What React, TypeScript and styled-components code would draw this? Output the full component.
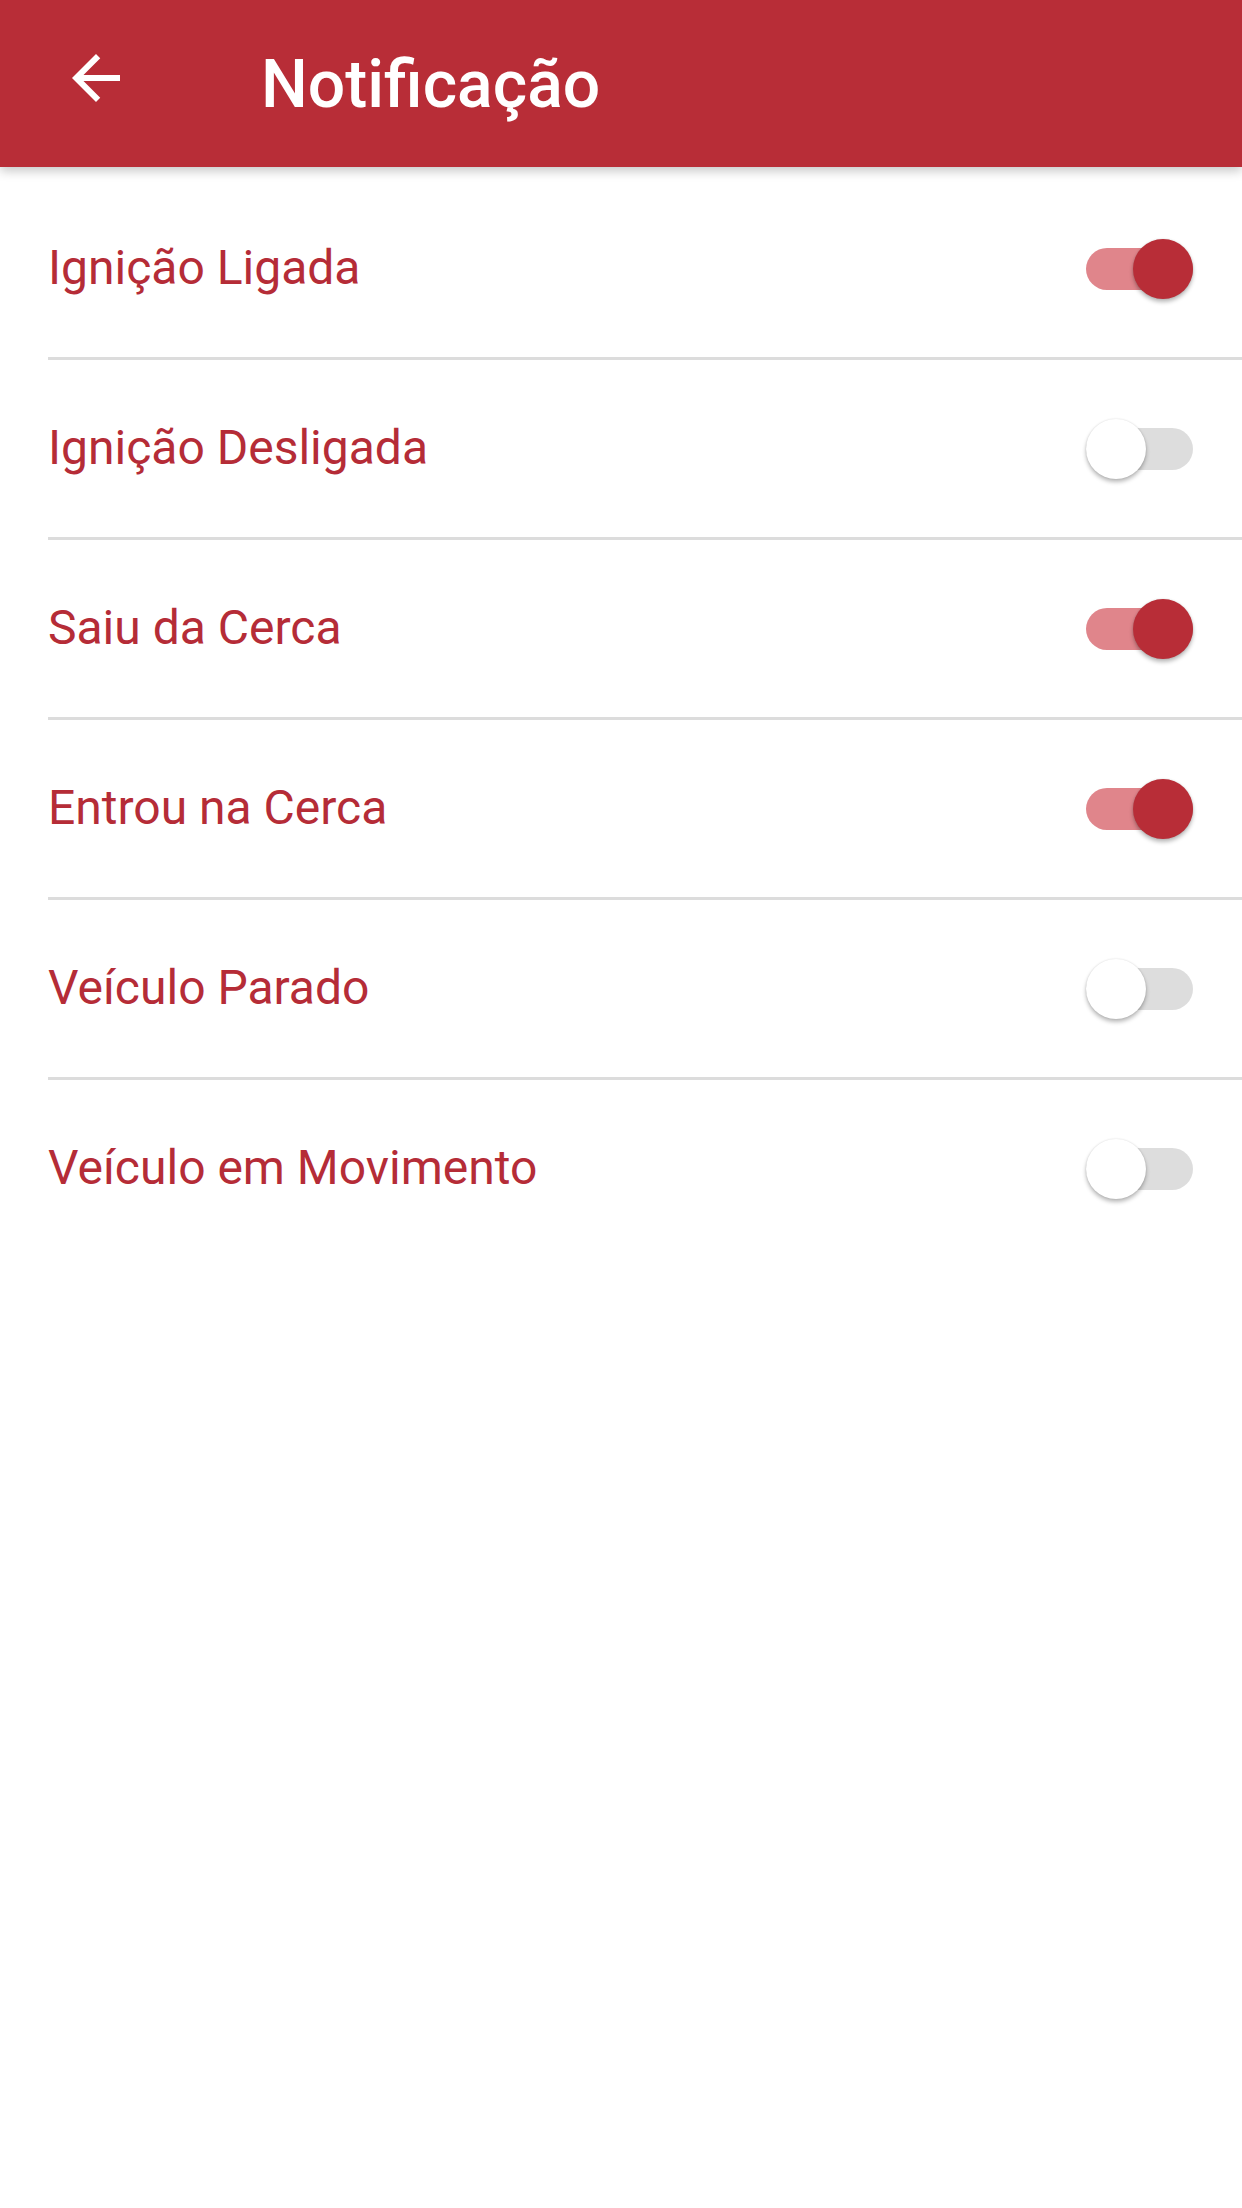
import React, { useState } from "react";
import styled, { createGlobalStyle } from "styled-components";

const GlobalStyle = createGlobalStyle`
  html, body {
    margin: 0;
    padding: 0;
    background: #ffffff;
  }
  body {
    font-family: Roboto, "Noto Sans", "Liberation Sans", sans-serif;
  }
  * { box-sizing: border-box; }
`;

const Page = styled.div`
  width: 1242px;
  min-height: 2208px;
  background: #ffffff;
`;

const Header = styled.header`
  position: relative;
  z-index: 1;
  height: 167px;
  background: #b82d37;
  display: flex;
  align-items: center;
  padding: 0 0 3px 60px;
  box-shadow: 0 4px 10px rgba(0, 0, 0, 0.22);
`;

const BackButton = styled.button`
  width: 72px;
  height: 72px;
  margin-bottom: 9px;
  padding: 0;
  border: none;
  background: transparent;
  display: flex;
  align-items: center;
  justify-content: center;
  cursor: pointer;
`;

const Title = styled.h1`
  margin: 5px 0 0 129px;
  color: #ffffff;
  font-family: Roboto, "Noto Sans", sans-serif;
  font-weight: 500;
  font-size: 66px;
  line-height: 1.17;
`;

const List = styled.main`
  margin-top: 13px;
  display: flex;
  flex-direction: column;
`;

const Row = styled.div<{ $last?: boolean }>`
  margin-left: 48px;
  padding-right: 49px;
  height: ${(p) => (p.$last ? 177 : 180)}px;
  display: flex;
  align-items: center;
  justify-content: space-between;
  border-bottom: ${(p) => (p.$last ? "none" : "3px solid #dcdcdc")};
`;

const Label = styled.span`
  color: #b52c37;
  font-family: Roboto, "Noto Sans", sans-serif;
  font-size: 48px;
  font-weight: 400;
  line-height: 1.17;
`;

const SwitchRoot = styled.button<{ $on: boolean }>`
  position: relative;
  width: 107px;
  height: 60px;
  padding: 0;
  border: none;
  background: transparent;
  cursor: pointer;
  display: flex;
  align-items: center;
`;

const Track = styled.span<{ $on: boolean }>`
  display: block;
  width: 107px;
  height: 42px;
  border-radius: 21px;
  background: ${(p) => (p.$on ? "#e0858b" : "#dddddd")};
`;

const Thumb = styled.span<{ $on: boolean }>`
  position: absolute;
  top: 0;
  left: ${(p) => (p.$on ? "47px" : "0px")};
  width: 60px;
  height: 60px;
  border-radius: 50%;
  background: ${(p) => (p.$on ? "#b82d37" : "#ffffff")};
  box-shadow: 0 3px 4px rgba(0, 0, 0, 0.28), 0 0 2px rgba(0, 0, 0, 0.12);
`;

const Toggle: React.FC<{ on: boolean; onChange: () => void }> = ({ on, onChange }) => (
  <SwitchRoot $on={on} onClick={onChange} aria-pressed={on}>
    <Track $on={on} />
    <Thumb $on={on} />
  </SwitchRoot>
);

const items = [
  { label: "Ignição Ligada", on: true },
  { label: "Ignição Desligada", on: false },
  { label: "Saiu da Cerca", on: true },
  { label: "Entrou na Cerca", on: true },
  { label: "Veículo Parado", on: false },
  { label: "Veículo em Movimento", on: false },
];

export default function App() {
  const [state, setState] = useState(items.map((i) => i.on));
  return (
    <Page>
      <GlobalStyle />
      <Header>
        <BackButton aria-label="Voltar">
          <svg width="72" height="72" viewBox="0 0 24 24">
            <path
              fill="#ffffff"
              d="M20 11H7.83l5.59-5.59L12 4l-8 8 8 8 1.41-1.41L7.83 13H20v-2z"
            />
          </svg>
        </BackButton>
        <Title>Notificação</Title>
      </Header>
      <List>
        {items.map((item, idx) => (
          <Row key={item.label} $last={idx === items.length - 1}>
            <Label>{item.label}</Label>
            <Toggle
              on={state[idx]}
              onChange={() =>
                setState((s) => s.map((v, i) => (i === idx ? !v : v)))
              }
            />
          </Row>
        ))}
      </List>
    </Page>
  );
}
